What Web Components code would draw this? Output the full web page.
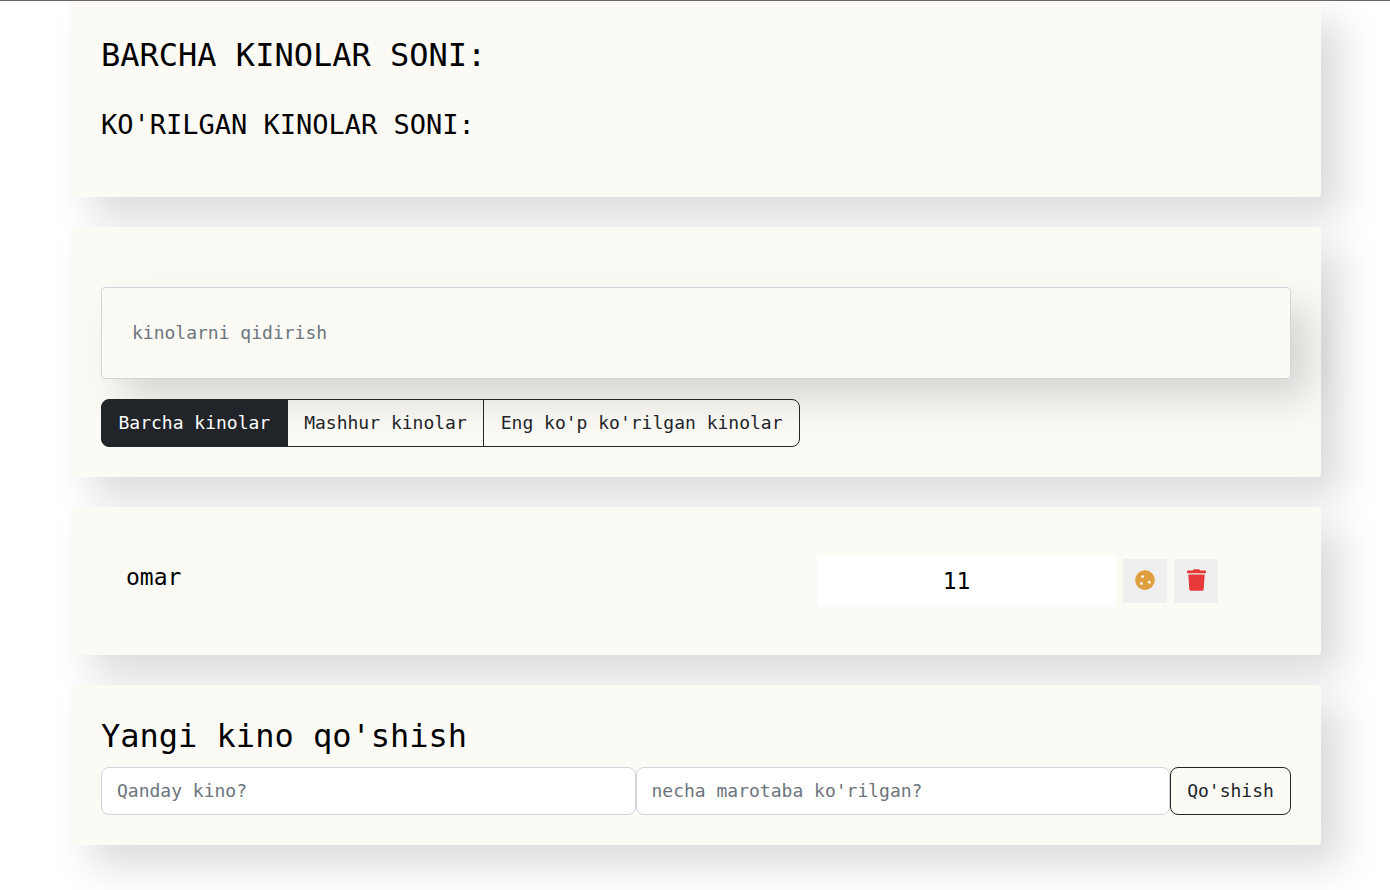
<!DOCTYPE html>
<html lang="uz">
<head>
<meta charset="utf-8">
<meta name="viewport" content="width=device-width, initial-scale=1">
<title>Kinolar</title>
<style>
  body { margin: 0; background: #fff; color: #000; font-family: "DejaVu Sans Mono", monospace; }
</style>
</head>
<body>
<movie-app></movie-app>
<script>
const define = (name, html, setup) => {
  const template = document.createElement('template');
  template.innerHTML = html;
  customElements.define(name, class extends HTMLElement {
    constructor() {
      super();
      this.attachShadow({ mode: 'open' }).append(template.content.cloneNode(true));
      if (setup) setup(this.shadowRoot);
    }
  });
};

// Raised card that wraps every section
define('movie-panel', `
  <style>
    :host { display: block; box-sizing: border-box; padding: 30px; border-radius: 4px;
            background: #fbfaf5; box-shadow: 20px 20px 40px rgba(0,0,0,.15); }
  </style>
  <slot></slot>`);

define('movie-info', `
  <style>
    :host { display: block; padding-bottom: 24px; }
    h1, h2 { margin: 0; font-weight: 400; text-transform: uppercase; }
    h1 { font-size: 32px; line-height: 48px; }
    h2 { margin-top: 28px; font-size: 27px; line-height: 36px; }
  </style>
  <h1>Barcha kinolar soni:</h1>
  <h2>Ko'rilgan kinolar soni:</h2>`);

define('movie-search', `
  <style>
    :host { display: block; padding-top: 30px; }
    input { display: block; width: 100%; height: 92px; box-sizing: border-box; margin: 0; padding: 28px 30px 30px;
            border: 1px solid #ced4da; border-radius: 4px; background: transparent; color: #212529;
            font: 18px/30px "DejaVu Sans Mono", monospace; box-shadow: 20px 20px 40px rgba(0,0,0,.15); }
    input::placeholder { color: #6c757d; opacity: 1; }
  </style>
  <input type="text" aria-label="kinolarni qidirish" placeholder="kinolarni qidirish">`);

define('movie-filter', `
  <style>
    :host { display: block; margin-top: 20px; }
    div { display: flex; width: 699px; max-width: 100%; }
    button { flex: 1 1 auto; height: 48px; margin: 0 0 0 -1px; padding: 0 15px; border: 1px solid #212529;
             background: transparent; color: #212529; font: 18px/30px "DejaVu Sans Mono", monospace;
             white-space: nowrap; }
    button:first-child { margin-left: 0; border-radius: 8px 0 0 8px; }
    button:last-child { border-radius: 0 8px 8px 0; }
    button[aria-pressed="true"] { background: #212529; color: #fff; }
  </style>
  <div role="group" aria-label="Filtr">
    <button type="button" aria-pressed="true">Barcha kinolar</button>
    <button type="button" aria-pressed="false">Mashhur kinolar</button>
    <button type="button" aria-pressed="false">Eng ko'p ko'rilgan kinolar</button>
  </div>`, root => {
    const buttons = root.querySelectorAll('button');
    buttons.forEach(b => b.addEventListener('click', () =>
      buttons.forEach(o => o.setAttribute('aria-pressed', String(o === b)))));
  });

define('movie-row', `
  <style>
    :host { display: flex; align-items: center; gap: 7px; padding: 18px 73px 18px 25px; }
    .name { flex: 1; padding-bottom: 8px; font-size: 23px; line-height: 30px; }
    input { width: 299px; height: 52px; box-sizing: border-box; margin: 0; padding: 0 20px 0 0; border: 0;
            background: #fff; color: #000; text-align: center;
            font: 23px/30px "DejaVu Sans Mono", monospace; }
    button { display: grid; place-items: center; width: 44px; height: 44px; margin: 0; padding: 0 0 2px;
             border: 0; background: #efefef; }
    svg { display: block; }
    .cookie { color: #e09f3e; }
    .trash { color: #e63939; }
  </style>
  <span class="name"><slot></slot></span>
  <input type="text" aria-label="Ko'rilgan" value="11">
  <button class="cookie" type="button" aria-label="Mashhur">
    <svg width="20" height="20" viewBox="0 0 20 20" aria-hidden="true">
      <path fill="currentColor" d="M7.4.8 9.2.2Q10 0 10.8.2L13 .7Q14 1 14.8 1.6L17.2 3.5Q18 4.2 18.4 5.1L19.5 7.7Q19.9 8.6 19.8 9.6L19.4 12.4Q19.2 13.4 18.7 14.2L17.1 16.7Q16.5 17.5 15.6 18L13.2 19.3Q12.3 19.8 11.3 19.8L8.7 19.7Q7.7 19.7 6.8 19.2L4.3 18Q3.4 17.5 2.8 16.6L1.2 14.4Q.6 13.6.5 12.6L.2 10Q.1 9 .5 8.1L1.4 5.5Q1.7 4.6 2.4 3.9L4.3 2.1Q5 1.5 5.9 1.2Z"/>
      <g fill="#f6f3f0"><circle cx="7.6" cy="6.6" r="1.45"/><circle cx="6.4" cy="13.5" r="1.45"/><circle cx="14.3" cy="12.3" r="1.45"/></g>
    </svg>
  </button>
  <button class="trash" type="button" aria-label="O'chirish">
    <svg width="19" height="22" viewBox="0 0 448 512" aria-hidden="true">
      <path fill="currentColor" d="M432 32H312l-9.4-18.7A24 24 0 0 0 281.1 0H166.8a23.7 23.7 0 0 0-21.4 13.3L136 32H16A16 16 0 0 0 0 48v32a16 16 0 0 0 16 16h416a16 16 0 0 0 16-16V48a16 16 0 0 0-16-16zM53.2 467a48 48 0 0 0 47.9 45h245.8a48 48 0 0 0 47.9-45L416 128H32z"/>
    </svg>
  </button>`);

define('movie-add-form', `
  <style>
    :host { display: block; }
    h2 { margin: 0 0 10px; font-size: 32px; font-weight: 400; line-height: 42px; }
    form { display: flex; margin: 0; }
    input, button { height: 48px; box-sizing: border-box; margin: 0; padding: 0 15px; border: 1px solid #ced4da;
                    border-radius: 8px; font: 18px/30px "DejaVu Sans Mono", monospace; }
    input { flex: 1; min-width: 0; padding-bottom: 2px; background: #fff; color: #212529; }
    input::placeholder { color: #6c757d; opacity: 1; }
    button { min-width: 121px; border-color: #212529; background: transparent; color: #212529; }
  </style>
  <h2>Yangi kino qo'shish</h2>
  <form>
    <input type="text" aria-label="Qanday kino?" placeholder="Qanday kino?">
    <input type="text" aria-label="necha marotaba ko'rilgan?" placeholder="necha marotaba ko'rilgan?">
    <button type="submit">Qo'shish</button>
  </form>`, root => root.querySelector('form').addEventListener('submit', e => e.preventDefault()));

define('movie-app', `
  <style>
    :host { display: block; box-sizing: border-box; min-height: 100vh; overflow: hidden;
            border-top: 1px solid #6b6667; padding: 0 69px 40px 71px; }
    main { display: grid; gap: 30px; }
    .first { border-radius: 0 0 4px 4px; }
  </style>
  <main>
    <movie-panel class="first"><movie-info></movie-info></movie-panel>
    <movie-panel><movie-search></movie-search><movie-filter></movie-filter></movie-panel>
    <movie-panel><movie-row>omar</movie-row></movie-panel>
    <movie-panel><movie-add-form></movie-add-form></movie-panel>
  </main>`);
</script>
</body>
</html>
